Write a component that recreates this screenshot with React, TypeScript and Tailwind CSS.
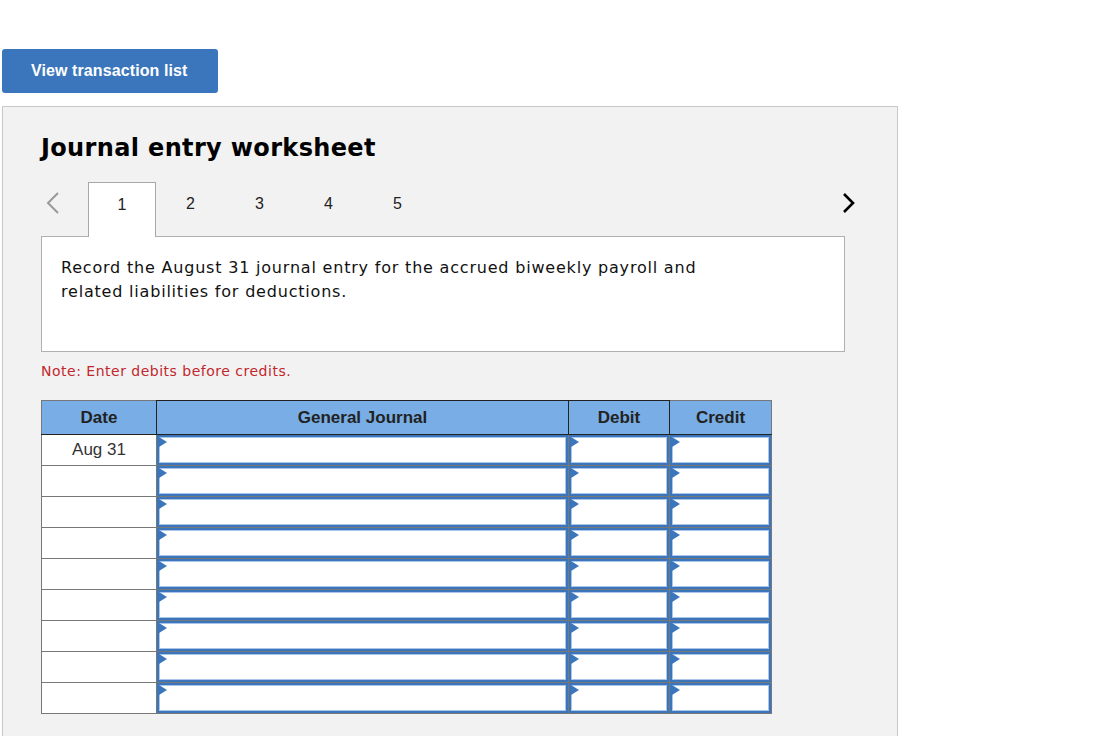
import React from 'react';

const verdana = { fontFamily: '"DejaVu Sans", Verdana, sans-serif' };

const InputCell = () => (
  <td className="p-0 border border-[#777]">
    <div className="relative h-[30px] bg-white border-2 border-[#3b76bc] shadow-[inset_0_0_0_1px_#a9c6ea]">
      <span className="absolute left-0 top-0 w-0 h-0 border-y-[5px] border-y-transparent border-l-[8px] border-l-[#3b76bc]" />
    </div>
  </td>
);

export default function App() {
  const rows = Array.from({ length: 9 }, (_, i) => i);

  return (
    <div className="w-[1102px] h-[736px] bg-white overflow-hidden pt-[49px]" style={{ fontFamily: '"Liberation Sans", Arial, sans-serif' }}>
      <button className="ml-[2px] w-[216px] h-[44px] rounded-[3px] bg-[#3b76bc] text-white font-bold text-[16px] text-left pl-[29px] tracking-[0.1px]">
        View transaction list
      </button>

      <div className="mt-[13px] ml-[2px] w-[896px] h-[640px] bg-[#f2f2f2] border border-[#c8c8c8] pl-[38px] pr-[52px]">
        <h1 className="mt-[25px] text-[24px] font-bold text-black leading-[32px] tracking-[0.35px]" style={verdana}>
          Journal entry worksheet
        </h1>

        <div className="mt-[18px] flex items-end h-[55px] relative">
          <span className="absolute left-[2px] top-[9px] text-[#999]">
            <svg width="18" height="24" viewBox="0 0 18 24" fill="none" stroke="currentColor" strokeWidth="2">
              <path d="M15 2 L5 12 L15 22" />
            </svg>
          </span>
          <div className="ml-[47px] flex">
            <div className="w-[68px] h-[55px] bg-white border border-b-0 border-[#a8a8a8] text-center pt-[10px] text-[16px] text-[#222] relative z-10">1</div>
            {['2', '3', '4', '5'].map((n) => (
              <div key={n} className="w-[69px] h-[55px] text-center pt-[10px] text-[16px] text-[#222]">{n}</div>
            ))}
          </div>
          <span className="absolute right-[-12px] top-[10px] text-black">
            <svg width="16" height="22" viewBox="0 0 16 22" fill="none" stroke="currentColor" strokeWidth="2.6">
              <path d="M3 2 L12 11 L3 20" />
            </svg>
          </span>
        </div>

        <div className="-mt-px w-[804px] h-[116px] bg-white border border-[#b0b0b0] px-[19px] pt-[19px] text-[16px] leading-[24px] tracking-[0.8px] text-[#111]" style={verdana}>
          Record the August 31 journal entry for the accrued biweekly payroll and
          <br />
          related liabilities for deductions.
        </div>

        <p className="mt-[9px] text-[14px] leading-[20px] tracking-[0.5px] text-[#c1272d]" style={verdana}>
          Note: Enter debits before credits.
        </p>

        <table className="mt-[19px] border-collapse table-fixed w-[730px]">
          <colgroup>
            <col className="w-[115px]" />
            <col className="w-[412px]" />
            <col className="w-[101px]" />
            <col className="w-[102px]" />
          </colgroup>
          <thead>
            <tr className="h-[34px] bg-[#78ade5] text-[17px] font-bold text-[#222]">
              <th className="border border-[#777] border-r-[#222] border-b-[#222]">Date</th>
              <th className="border border-[#222]">General Journal</th>
              <th className="border border-[#222]">Debit</th>
              <th className="border border-[#777] border-l-[#222] border-b-[#222]">Credit</th>
            </tr>
          </thead>
          <tbody>
            {rows.map((i) => (
              <tr key={i} className="h-[31px]">
                <td className="border border-[#777] bg-white text-center text-[17px] text-[#333] align-middle">
                  {i === 0 ? 'Aug 31' : ''}
                </td>
                <InputCell />
                <InputCell />
                <InputCell />
              </tr>
            ))}
          </tbody>
        </table>
      </div>
    </div>
  );
}
